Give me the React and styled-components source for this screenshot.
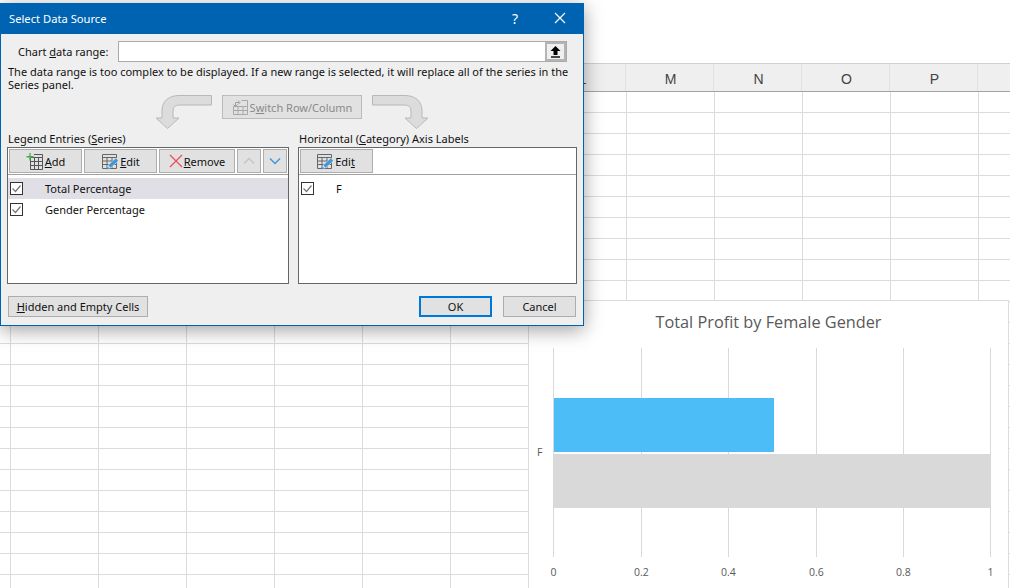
import React from 'react';
import styled, { createGlobalStyle } from 'styled-components';

const GlobalStyle = createGlobalStyle`
	html, body {
		margin: 0;
		padding: 0;
		background: #fff;
		overflow: hidden;
	}
	u {
		text-underline-offset: 1px;
	}
`;

/* Worksheet behind the dialog */
const Page = styled.div`
	position: relative;
	width: 1010px;
	height: 588px;
	overflow: hidden;
	background: #fff;
	padding-top: 63px;
	box-sizing: border-box;
`;

const ColumnHeader = styled.div`
	display: grid;
	grid-template-columns: 10px repeat(12, 88px);
	height: 29px;
	box-sizing: border-box;
	background: #efefef;
	border-top: 1px solid #d0d0d0;
	border-bottom: 1px solid #a3a3a3;
`;

const ColumnName = styled.div`
	display: flex;
	align-items: center;
	justify-content: center;
	padding: 3px 0 0 2px;
	box-sizing: border-box;
	font: 14px "Liberation Sans", Arial, sans-serif;
	color: #444;
	border-right: 1px solid #e0e0e0;
`;

const Cells = styled.div`
	height: 496px;
	background-color: #fff;
	background-image:
		repeating-linear-gradient(to right, transparent 0 9px, #dcdcdc 9px 10px, transparent 10px 88px),
		repeating-linear-gradient(to bottom, transparent 0 20px, #dcdcdc 20px 21px);
	background-position: 1px 0, 0 0;
`;

/* Chart floating over the sheet */
const ChartCard = styled.section`
	position: absolute;
	left: 528px;
	top: 300px;
	width: 481px;
	height: 300px;
	box-sizing: border-box;
	background: #fff;
	border: 1px solid #dcdcdc;
`;

const ChartTitle = styled.h2`
	margin: 0;
	padding-top: 10px;
	height: 37px;
	box-sizing: border-box;
	text-align: center;
	font: 400 16.3px "Open Sans", "Noto Sans", sans-serif;
	color: #595959;
`;

const Plot = styled.svg`
	display: block;
`;

const AxisText = styled.text`
	font: 10.5px "Open Sans", "Noto Sans", sans-serif;
	fill: #595959;
`;

/* Dialog */
const Dialog = styled.div`
	position: absolute;
	left: 0;
	top: 3px;
	width: 584px;
	height: 323px;
	box-sizing: border-box;
	display: flex;
	flex-direction: column;
	background: #efefef;
	border: 1px solid #0063b1;
	box-shadow: 0 4px 18px rgba(0, 0, 0, 0.38);
	font: 11px/13px "Noto Sans", "Open Sans", sans-serif;
	color: #111;
`;

const TitleBar = styled.header`
	display: flex;
	align-items: center;
	height: 30px;
	flex: none;
	box-sizing: border-box;
	padding: 0 0 2px 8px;
	background: #0063b1;
	color: #fff;
	font-size: 11.2px;
`;

const TitleText = styled.span`
	flex: 1;
`;

const HelpMark = styled.span`
	width: 20px;
	margin-right: 29px;
	text-align: center;
	font-size: 14px;
`;

const CloseBox = styled.span`
	display: flex;
	margin-right: 17px;
`;

const Body = styled.div`
	flex: 1;
	display: flex;
	flex-direction: column;
	padding: 7px 6px 8px 6px;
`;

const RangeRow = styled.div`
	display: flex;
	align-items: center;
	height: 21px;
	padding-left: 11px;
`;

const RangeLabel = styled.label`
	width: 100px;
`;

const RangeField = styled.div`
	display: flex;
	justify-content: flex-end;
	width: 449px;
	height: 21px;
	box-sizing: border-box;
	background: #fff;
	border: 1px solid #aaa;
`;

const CollapseButton = styled.div`
	display: flex;
	align-items: center;
	justify-content: center;
	width: 21px;
	box-sizing: border-box;
	background: #efefef;
	border: 2px solid #b4b4b4;
`;

const Message = styled.p`
	margin: 3px 0 0;
	padding-left: 1px;
	height: 29px;
	width: 570px;
`;

const SwitchRow = styled.div`
	display: flex;
	align-items: flex-start;
	height: 35px;
	padding-left: 148px;
`;

const BendArrow = styled.svg`
	display: block;
	flex: none;
`;

const SwitchButton = styled.div`
	display: flex;
	align-items: center;
	justify-content: center;
	gap: 1px;
	width: 140px;
	height: 24px;
	margin: 1px 10px 0;
	box-sizing: border-box;
	background: #e1e1e1;
	border: 1px solid #bcbcbc;
	color: #8a8a8a;
`;

const Panels = styled.div`
	display: flex;
	gap: 9px;
`;

const PanelColumn = styled.div`
	width: ${p => p.$width}px;
`;

const PanelLabel = styled.div`
	height: 18px;
	padding-left: 1px;
	padding-top: 3px;
	box-sizing: border-box;
`;

const Panel = styled.div`
	height: 137px;
	box-sizing: border-box;
	background: #fff;
	border: 1px solid #666;
`;

const Toolbar = styled.div`
	display: flex;
	gap: 2px;
	height: 27px;
	box-sizing: border-box;
	padding: 1px;
	background: #fff;
	border-bottom: 1px solid #a0a0a0;
	margin-bottom: 3px;
`;

const ToolButton = styled.div`
	display: flex;
	align-items: center;
	justify-content: center;
	gap: 1px;
	width: ${p => p.$width}px;
	height: 24px;
	box-sizing: border-box;
	padding-right: ${p => p.$nudge || 0}px;
	background: #e1e1e1;
	border: 1px solid #adadad;
	color: ${p => (p.$muted ? '#999' : '#111')};
`;

const Row = styled.div`
	display: flex;
	align-items: center;
	height: 21px;
	padding-left: ${p => p.$inset}px;
	background: ${p => (p.$selected ? '#e0dfe6' : '#fff')};
`;

const Check = styled.svg`
	display: block;
	flex: none;
`;

const RowText = styled.span`
	margin-left: ${p => p.$gap}px;
`;

const Footer = styled.footer`
	display: flex;
	align-items: center;
	margin-top: 12px;
	padding-left: 1px;
`;

const DialogButton = styled.div`
	display: flex;
	align-items: center;
	justify-content: center;
	width: ${p => p.$width}px;
	height: 21px;
	box-sizing: border-box;
	margin-left: ${p => p.$gap || 0}px;
	background: #e1e1e1;
	border: ${p => (p.$primary ? '2px solid #0078d7' : '1px solid #adadad')};
`;

/* Icons */
const AddTableIcon = () => (
	<svg width="18" height="17" viewBox="0 0 18 17">
		<path d="M4.500 4.500h12v12h-12zM4.500 8.500h12M4.500 12.500h12M8.500 4.500v12M12.500 4.500v12" fill="none" stroke="#555" />
		<path d="M8 1.500h8.500v3" fill="none" stroke="#555" />
		<path d="M4 0v7.500M0.500 3.750h7" stroke="#3fae49" strokeWidth="1.300" />
	</svg>
);

const EditTableIcon = () => (
	<svg width="18" height="17" viewBox="0 0 18 17">
		<path d="M1.500 1.500h14v14h-14zM1.500 4.500h14M1.500 8h14M1.500 11.500h14M6 4.500v11M11 4.500v11" fill="none" stroke="#666" />
		<path d="M6 16l1-4 8-7.500 3 3-8 7.500z" fill="#e1e1e1" />
		<path d="M8.500 13.500L16 6.500" stroke="#3c97dc" strokeWidth="3.200" />
		<path d="M5.500 16.500l1-3 2 2z" fill="#3c97dc" />
	</svg>
);

const SwitchIcon = () => (
	<svg width="17" height="17" viewBox="0 0 17 17">
		<path d="M1.500 7.500h14v8h-14zM1.500 11.500h14M6 7.500v8M11 7.500v8M9.500 1.500h6v6" fill="none" stroke="#a8a8a8" />
		<path d="M3.500 7V3.500h4M6 1.500l2 2-2 2M1.500 5.500l2 2 2-2" fill="none" stroke="#a0a0a0" />
	</svg>
);

const RedCross = () => (
	<svg width="14" height="14" viewBox="0 0 14 14">
		<path d="M1 1l12 12M13 1L1 13" stroke="#e8505b" strokeWidth="1.300" fill="none" />
	</svg>
);

const Chevron = ({ up }) => (
	<svg width="12" height="8" viewBox="0 0 12 8">
		<path
			d={up ? 'M1 6.500l5-5 5 5' : 'M1 1.500l5 5 5-5'}
			fill="none"
			stroke={up ? '#c4c4c4' : '#3a96dd'}
			strokeWidth="1.400"
		/>
	</svg>
);

const CheckBox = () => (
	<Check width="13" height="13" viewBox="0 0 13 13">
		<rect x="0.5" y="0.5" width="12" height="12" fill="#fff" stroke="#333" />
		<path d="M2.500 6.500l3 3 5-6" fill="none" stroke="#777" strokeWidth="1.200" />
	</Check>
);

const LeftArrow = () => (
	<BendArrow width="57" height="35" viewBox="0 0 57 35">
		<path
			d="M56.500 1.500H24C14 1.500 7 7 7 17v7H1l11.500 10.500L24 24h-6v-6c0-5 2-7 7-7h31.500z"
			fill="#dcdcdc"
			stroke="#b8b8b8"
		/>
	</BendArrow>
);

const RightArrow = () => (
	<BendArrow width="57" height="35" viewBox="0 0 57 35">
		<path
			d="M0.500 1.500H33C43 1.500 50 7 50 17v7h6L44.500 34.500 33 24h6v-6c0-5-2-7-7-7H0.500z"
			fill="#dcdcdc"
			stroke="#b8b8b8"
		/>
	</BendArrow>
);

// the columns left of L sit behind the dialog, so they stay unlabelled
const columns = ['', '', '', '', '', '', '', 'L', 'M', 'N', 'O', 'P', ''];
const ticks = [
	{ label: '0', x: 24 },
	{ label: '0.2', x: 112 },
	{ label: '0.4', x: 199 },
	{ label: '0.6', x: 287 },
	{ label: '0.8', x: 374 },
	{ label: '1', x: 461 },
];

const Chart = () => (
	<ChartCard>
		<ChartTitle>Total Profit by Female Gender</ChartTitle>
		<Plot width="479" height="252" viewBox="0 0 479 252">
			{ticks.map(t => (
				<line key={t.label} x1={t.x + 0.5} x2={t.x + 0.5} y1="10" y2="219" stroke="#d9d9d9" />
			))}
			<rect x="25" y="60" width="220" height="54" fill="#4dbdf7" />
			<rect x="24" y="116" width="438" height="54" fill="#d9d9d9" />
			<AxisText x="8" y="118">F</AxisText>
			{ticks.map(t => (
				<AxisText key={t.label} x={t.x + 0.5} y="238" textAnchor="middle">{t.label}</AxisText>
			))}
		</Plot>
	</ChartCard>
);

export default function App() {
	return (
		<Page>
			<GlobalStyle />
			<ColumnHeader>
				{columns.map((c, i) => <ColumnName key={i}>{c}</ColumnName>)}
			</ColumnHeader>
			<Cells />
			<Chart />
			<Dialog>
				<TitleBar>
					<TitleText>Select Data Source</TitleText>
					<HelpMark>?</HelpMark>
					<CloseBox>
						<svg width="12" height="12" viewBox="0 0 12 12">
							<path d="M1 1l10 10M11 1L1 11" stroke="#fff" strokeWidth="1.200" fill="none" />
						</svg>
					</CloseBox>
				</TitleBar>
				<Body>
					<RangeRow>
						<RangeLabel>Chart <u>d</u>ata range:</RangeLabel>
						<RangeField>
							<CollapseButton>
								<svg width="11" height="12" viewBox="0 0 11 12">
									<path d="M5.500 0L10.500 5H7.500v4h-4V5H0.500z" fill="#000" />
									<path d="M1 11h9" stroke="#000" strokeWidth="1.400" />
								</svg>
							</CollapseButton>
						</RangeField>
					</RangeRow>
					<Message>
						The data range is too complex to be displayed. If a new range is selected, it will replace all of the series in the Series panel.
					</Message>
					<SwitchRow>
						<LeftArrow />
						<SwitchButton>
							<SwitchIcon />
							<span>S<u>w</u>itch Row/Column</span>
						</SwitchButton>
						<RightArrow />
					</SwitchRow>
					<Panels>
						<PanelColumn $width={282}>
							<PanelLabel>Legend Entries (<u>S</u>eries)</PanelLabel>
							<Panel>
								<Toolbar>
									<ToolButton $width={73}><AddTableIcon /><span><u>A</u>dd</span></ToolButton>
									<ToolButton $width={73}><EditTableIcon /><span><u>E</u>dit</span></ToolButton>
									<ToolButton $width={76}><RedCross /><span><u>R</u>emove</span></ToolButton>
									<ToolButton $width={24} $muted><Chevron up /></ToolButton>
									<ToolButton $width={24}><Chevron /></ToolButton>
								</Toolbar>
								<Row $inset={2} $selected><CheckBox /><RowText $gap={22}>Total Percentage</RowText></Row>
								<Row $inset={2}><CheckBox /><RowText $gap={22}>Gender Percentage</RowText></Row>
							</Panel>
						</PanelColumn>
						<PanelColumn $width={279}>
							<PanelLabel>Horizontal (<u>C</u>ategory) Axis Labels</PanelLabel>
							<Panel>
								<Toolbar>
									<ToolButton $width={73} $nudge={2}><EditTableIcon /><span>Edi<u>t</u></span></ToolButton>
								</Toolbar>
								<Row $inset={2}><CheckBox /><RowText $gap={22}>F</RowText></Row>
							</Panel>
						</PanelColumn>
					</Panels>
					<Footer>
						<DialogButton $width={140}><span><u>H</u>idden and Empty Cells</span></DialogButton>
						<DialogButton $width={73} $gap={271} $primary>OK</DialogButton>
						<DialogButton $width={73} $gap={11}>Cancel</DialogButton>
					</Footer>
				</Body>
			</Dialog>
		</Page>
	);
}
